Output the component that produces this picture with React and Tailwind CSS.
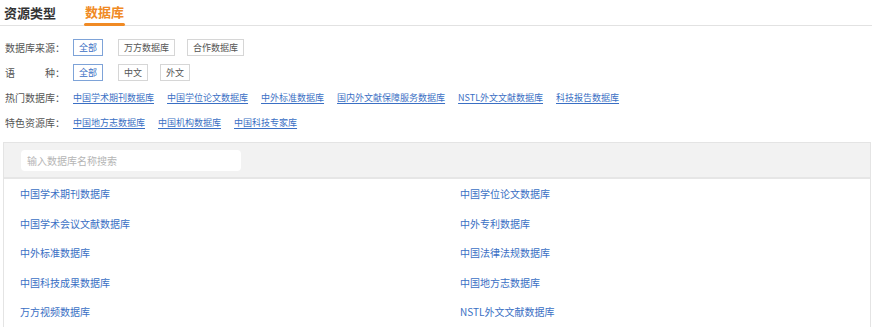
import React from 'react';

const hot = ['中国学术期刊数据库', '中国学位论文数据库', '中外标准数据库', '国内外文献保障服务数据库', 'NSTL外文文献数据库', '科技报告数据库'];
const special = ['中国地方志数据库', '中国机构数据库', '中国科技专家库'];
const dbs = [
    ['中国学术期刊数据库', '中国学位论文数据库'],
    ['中国学术会议文献数据库', '中外专利数据库'],
    ['中外标准数据库', '中国法律法规数据库'],
    ['中国科技成果数据库', '中国地方志数据库'],
    ['万方视频数据库', 'NSTL外文文献数据库'],
];

function Chip({ active, className = '', children }) {
    return (
        <span
            className={
                'flex h-[17px] items-center px-[5px] border text-[9px] leading-none ' +
                (active ? 'border-[#7ea3d8] text-[#3a6fc4] ' : 'border-[#d6d6d6] text-[#555] ') +
                className
            }
        >
            {children}
        </span>
    );
}

function FilterRow({ label, children }) {
    return (
        <div className="flex items-center h-[25px]">
            <div className="w-[68px] text-[10px] text-[#555]">{label}</div>
            <div className="flex items-center">{children}</div>
        </div>
    );
}

export default function App() {
    return (
        <div className="w-[872px] h-[331px] overflow-hidden bg-white" style={{ fontFamily: '"Noto Sans CJK SC", "Noto Sans", sans-serif' }}>
            {/* tabs */}
            <div className="flex items-end h-[26px] border-b border-[#e2e2e2]">
                <div className="ml-[4px] pb-[6px] text-[13px] font-bold text-[#333] leading-none">资源类型</div>
                <div className="ml-[28px] flex flex-col items-center">
                    <span className="text-[13px] font-bold text-[#f08a24] leading-none pb-[5px]">数据库</span>
                    <span className="block w-[41px] h-[3px] bg-[#f08a24] rounded-sm -mb-[1px]" />
                </div>
            </div>

            {/* filters */}
            <div className="pl-[5px] pt-[9px]">
                <FilterRow label="数据库来源：">
                    <Chip active className="mr-[15px]">全部</Chip>
                    <Chip className="mr-[12px]">万方数据库</Chip>
                    <Chip>合作数据库</Chip>
                </FilterRow>
                <FilterRow
                    label={
                        <div className="flex justify-between w-[60px]">
                            <span>语</span>
                            <span>种：</span>
                        </div>
                    }
                >
                    <Chip active className="mr-[15px]">全部</Chip>
                    <Chip className="mr-[12px]">中文</Chip>
                    <Chip>外文</Chip>
                </FilterRow>
                <FilterRow label="热门数据库：">
                    <div className="flex gap-x-[13px]">
                        {hot.map((h) => (
                            <a key={h} className="text-[9px] text-[#3a6fc4] underline underline-offset-2">{h}</a>
                        ))}
                    </div>
                </FilterRow>
                <FilterRow label="特色资源库：">
                    <div className="flex gap-x-[13px]">
                        {special.map((h) => (
                            <a key={h} className="text-[9px] text-[#3a6fc4] underline underline-offset-2">{h}</a>
                        ))}
                    </div>
                </FilterRow>
            </div>

            {/* panel */}
            <div className="ml-[3px] mr-[1px] mt-[7px] border-l border-r border-t border-[#e4e4e4]">
                <div className="h-[36px] bg-[#f2f2f2] border-b-2 border-[#e6e6e6] flex items-center pl-[17px]">
                    <div className="w-[220px] h-[21px] bg-white rounded-sm flex items-center px-[6px] text-[10px] text-[#b5b5b5]">
                        输入数据库名称搜索
                    </div>
                </div>
                <div>
                    {dbs.map(([a, b]) => (
                        <div key={a} className="flex items-center h-[29.5px]">
                            <span className="pl-[16px] w-[456px] text-[10px] text-[#3a6fc4]">{a}</span>
                            <span className="text-[10px] text-[#3a6fc4]">{b}</span>
                        </div>
                    ))}
                </div>
            </div>
        </div>
    );
}
